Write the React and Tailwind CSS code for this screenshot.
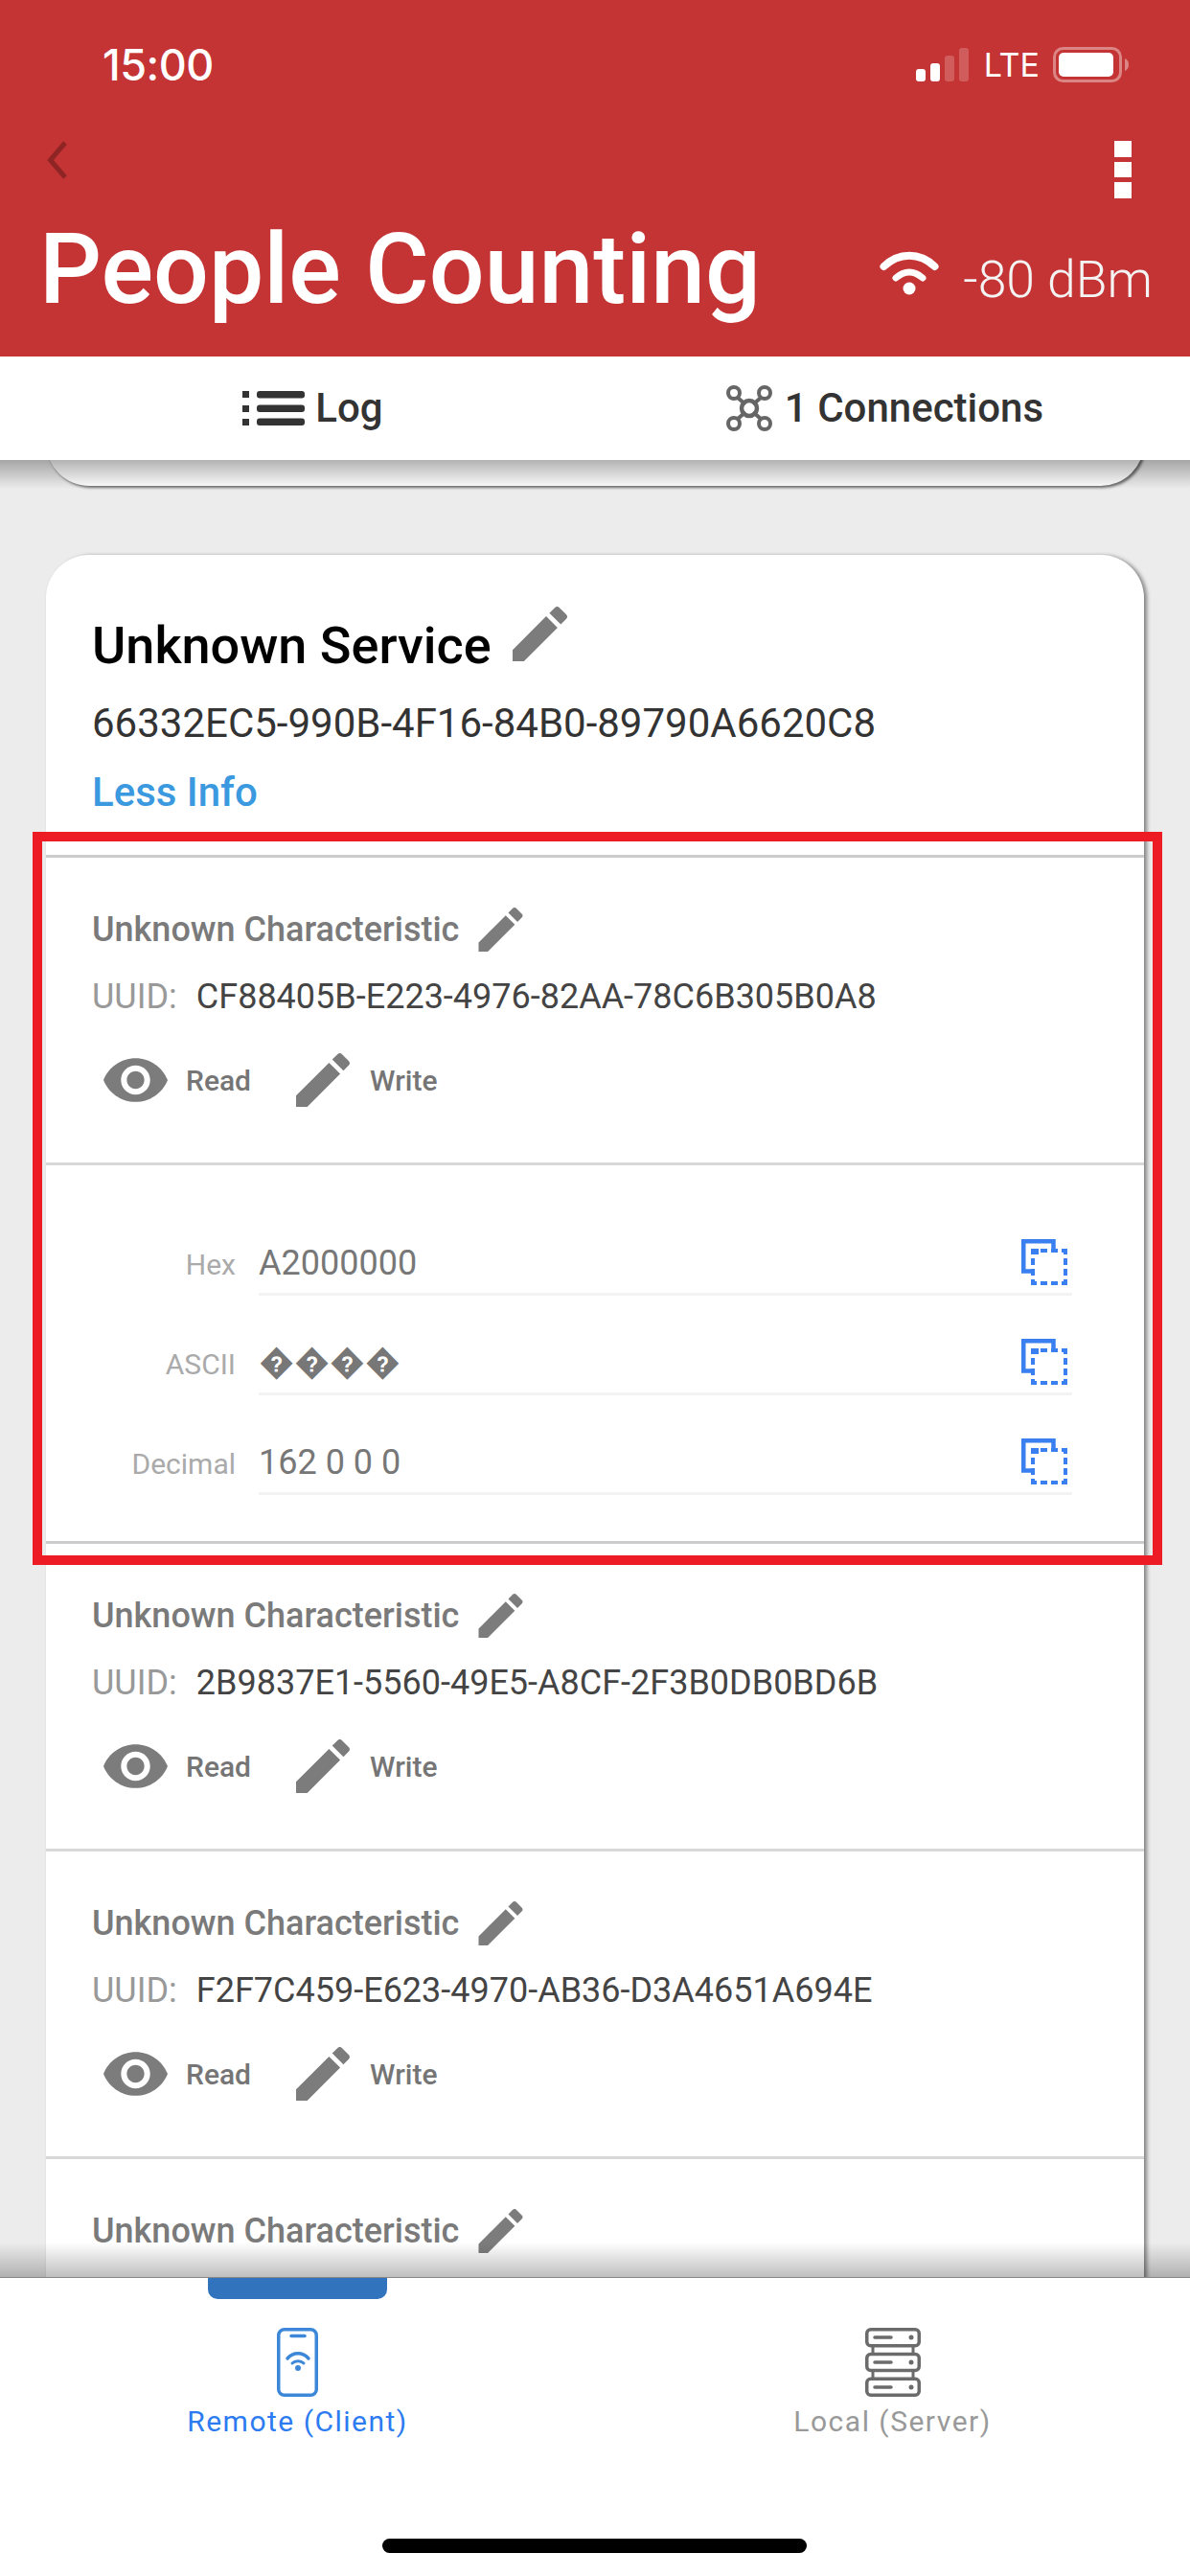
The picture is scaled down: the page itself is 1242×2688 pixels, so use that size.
const PENCIL = "M3 17.25V21h3.75L17.81 9.94l-3.75-3.75L3 17.25zM20.71 7.04c.39-.39.39-1.02 0-1.41l-2.34-2.34c-.39-.39-1.02-.39-1.41 0l-1.83 1.83 3.75 3.75 1.83-1.83z";
const EYE = "M12 4.5C7 4.5 2.73 7.61 1 12c1.73 4.39 6 7.5 11 7.5s9.27-3.11 11-7.5c-1.73-4.39-6-7.5-11-7.5zM12 17c-2.76 0-5-2.24-5-5s2.24-5 5-5 5 2.24 5 5-2.24 5-5 5zm0-8c-1.66 0-3 1.34-3 3s1.34 3 3 3 3-1.34 3-3-1.34-3-3-3z";

function Pencil({ className }) {
  return (
    <svg viewBox="3 3 18 18" className={className} fill="#7c7c7c">
      <path d={PENCIL} />
    </svg>
  );
}

function CopyIcon() {
  return (
    <svg viewBox="0 0 48 48" className="w-[48px] h-[48px]" fill="none" stroke="#3a7ff0">
      <path d="M14 33.500H2.250V2.250H33.500V12" strokeWidth="4.500" />
      <path
        d="M10 12H16V16M20 12H27M31 12H38M42 12H46V16M10 46H16M20 46H27M31 46H38M42 46H46V42M12 12V16M12 20V27M12 31V38M12 42V46M46 20V27M46 31V38"
        strokeWidth="4"
      />
    </svg>
  );
}

function StatusBar() {
  return (
    <div className="mt-[49px] h-[37px] flex items-center justify-between pl-[107px] pr-[64px] text-white">
      <span className="text-[45px] leading-[37px] font-medium font-['Inter',sans-serif] tracking-[-0.5px]">15:00</span>
      <div className="flex items-center">
        <svg viewBox="0 0 55 35" className="w-[55px] h-[35px]" fill="#fff">
          <rect x="0" y="22" width="10" height="13" rx="3" />
          <rect x="15" y="16" width="10" height="19" rx="3" />
          <rect x="30" y="8" width="10" height="27" rx="3" fillOpacity="0.2" />
          <rect x="45" y="0" width="10" height="35" rx="3" fillOpacity="0.2" />
        </svg>
        <span className="ml-[16px] text-[34px] leading-[37px] font-normal font-['Inter',sans-serif]">LTE</span>
        <svg viewBox="0 0 79 37" className="ml-[14px] w-[79px] h-[37px]" fill="#fff">
          <rect x="1.500" y="1.500" width="69" height="34" rx="9" fill="none" stroke="#fff" strokeOpacity="0.4" strokeWidth="3" />
          <rect x="6" y="6" width="57" height="25" rx="5" />
          <path d="M75 12c2.500 1 4 3.500 4 6.500s-1.500 5.500-4 6.500z" fillOpacity="0.4" />
        </svg>
      </div>
    </div>
  );
}

function Header() {
  return (
    <div className="bg-[#c53434] h-[372px] shrink-0 flex flex-col">
      <StatusBar />
      <div className="mt-[61px] h-[60px] flex justify-between items-start pl-[49px] pr-[61px]">
        <svg viewBox="0 0 22 40" className="w-[22px] h-[40px]" fill="none" stroke="#8f2424" strokeWidth="5">
          <path d="M19 2L3.500 20L19 38" />
        </svg>
        <div className="flex flex-col gap-[5px]">
          <div className="w-[18px] h-[17px] bg-white" />
          <div className="w-[18px] h-[16px] bg-white" />
          <div className="w-[18px] h-[17px] bg-white" />
        </div>
      </div>
      <div className="mt-[14px] flex justify-between items-center pl-[41px] pr-[39px] h-[120px]">
        <span className="text-[102px] leading-[120px] font-medium text-white">People Counting</span>
        <div className="flex items-center mt-[14px]">
          <svg viewBox="0 0 62 46" className="w-[62px] h-[46px] mt-[-6px]" fill="none" stroke="#fff" strokeLinecap="round">
            <path d="M4.500 16C20 1 42 1 57.500 16" strokeWidth="8" />
            <path d="M17 28C26 20 36 20 45 28" strokeWidth="7" />
            <circle cx="31" cy="39" r="6.500" fill="#fff" stroke="none" />
          </svg>
          <span className="ml-[25px] mt-[7px] text-[53.500px] leading-[60px] font-light text-[#f4f4f4]">-80 dBm</span>
        </div>
      </div>
    </div>
  );
}

function TabBar() {
  return (
    <div className="bg-white h-[108px] shrink-0 grid grid-cols-2 text-[#333] relative z-10">
      <div className="flex items-center justify-center pl-[32px]">
        <svg viewBox="0 0 65 36" className="w-[65px] h-[36px]" fill="#333">
          <rect x="0" y="0" width="7" height="7" />
          <rect x="0" y="15" width="7" height="7" />
          <rect x="0" y="29" width="7" height="7" />
          <rect x="15" y="0" width="50" height="7.500" rx="3" />
          <rect x="15" y="14.500" width="50" height="7.500" rx="3" />
          <rect x="15" y="28.500" width="50" height="7.500" rx="3" />
        </svg>
        <span className="ml-[11px] text-[42px] leading-[48px] font-medium">Log</span>
      </div>
      <div className="flex items-center justify-center pr-[16px]">
        <svg viewBox="0 0 48 48" className="w-[48px] h-[48px]" fill="none" stroke="#666">
          <path d="M12 13L20 20M36 13L28 20M12 35L20 28M36 35L28 28" strokeWidth="4" />
          <circle cx="8" cy="8" r="6" strokeWidth="4" />
          <circle cx="40" cy="8" r="6" strokeWidth="4" />
          <circle cx="8" cy="40" r="6" strokeWidth="4" />
          <circle cx="40" cy="40" r="6" strokeWidth="4" />
          <circle cx="24" cy="24" r="8" strokeWidth="4.500" />
        </svg>
        <span className="ml-[13px] text-[42px] leading-[48px] font-medium">1 Connections</span>
      </div>
    </div>
  );
}

function CharacteristicTitle() {
  return (
    <div className="mt-[52px] h-[46px] flex items-center">
      <span className="text-[36px] font-medium text-[#7a7a7a]">Unknown Characteristic</span>
      <Pencil className="ml-[20px] w-[47px] h-[46px]" />
    </div>
  );
}

function CharacteristicHeader({ uuid, dividerColor }) {
  return (
    <div className={`h-[321px] border-t-[3px] ${dividerColor} pl-[48px] flex flex-col`}>
      <CharacteristicTitle />
      <div className="mt-[24px] h-[46px] flex items-center text-[36px]">
        <span className="text-[#999]">UUID:</span>
        <span className="ml-[20px] text-[#444]">{uuid}</span>
      </div>
      <div className="mt-[36px] h-[56px] flex items-center text-[30px] font-medium text-[#757575]">
        <svg viewBox="1 4.500 22 15" className="ml-[12px] w-[67px] h-[46px]" fill="#7c7c7c">
          <path d={EYE} />
        </svg>
        <span className="ml-[19px]">Read</span>
        <Pencil className="ml-[47px] w-[56px] h-[56px]" />
        <span className="ml-[21px]">Write</span>
      </div>
    </div>
  );
}

function ValueRow({ label, value }) {
  return (
    <div className="flex items-center mt-[36px] first:mt-[68px]">
      <div className="w-[198px] text-right text-[30px] text-[#aaa] pt-[2px]">{label}</div>
      <div className="ml-[24px] w-[849px] h-[68px] border-b-[3px] border-[#f3f3f3] flex items-center justify-between pr-[5px] text-[36px] text-[#777]">
        <span className="pt-[2px] font-['Roboto','DejaVu_Sans',sans-serif]">{value}</span>
        <CopyIcon />
      </div>
    </div>
  );
}

function Details() {
  return (
    <div className="h-[395px] border-t-[3px] border-[#d8d8d8] flex flex-col">
      <ValueRow label="Hex" value="A2000000" />
      <ValueRow label="ASCII" value={"\uFFFD\uFFFD\uFFFD\uFFFD"} />
      <ValueRow label="Decimal" value="162 0 0 0" />
    </div>
  );
}

function ServiceCard() {
  return (
    <div className="mt-[72px] ml-[48px] w-[1146px] bg-white rounded-t-[45px] shadow-[3px_1px_4px_rgba(0,0,0,0.45)]">
      <div className="h-[313px] pl-[48px] flex flex-col">
        <div className="mt-[64px] h-[60px] flex items-center">
          <span className="text-[54px] font-medium text-black">Unknown Service</span>
          <Pencil className="ml-[22px] mt-[-24px] w-[57px] h-[57px]" />
        </div>
        <div className="mt-[26px] h-[50px] flex items-center text-[42px] text-[#333]">
          66332EC5-990B-4F16-84B0-89790A6620C8
        </div>
        <div className="mt-[22px] h-[50px] flex items-center text-[42px] font-medium text-[#3b99e0]">Less Info</div>
      </div>
      <CharacteristicHeader uuid="CF88405B-E223-4976-82AA-78C6B305B0A8" dividerColor="border-[#cccccc]" />
      <Details />
      <CharacteristicHeader uuid="2B9837E1-5560-49E5-A8CF-2F3B0DB0BD6B" dividerColor="border-[#cccccc]" />
      <CharacteristicHeader uuid="F2F7C459-E623-4970-AB36-D3A4651A694E" dividerColor="border-[#d8d8d8]" />
      <div className="h-[321px] border-t-[3px] border-[#d8d8d8] pl-[48px] flex flex-col">
        <CharacteristicTitle />
      </div>
    </div>
  );
}

function BottomNav() {
  return (
    <div className="bg-white h-[312px] shrink-0 border-t border-[#888] grid grid-cols-2 relative z-10">
      <div className="flex flex-col items-center">
        <div className="w-[187px] h-[22px] bg-[#3173bd] rounded-b-[10px]" />
        <svg viewBox="0 0 43 72" className="mt-[30px] w-[43px] h-[72px]" fill="none" stroke="#3d87d9" strokeLinecap="round">
          <rect x="1.750" y="1.750" width="39.500" height="68.500" rx="6" strokeWidth="3.500" />
          <path d="M15 8.500H29" strokeWidth="3.500" />
          <path d="M11 32C17 25 27 25 33 32" strokeWidth="3.500" />
          <path d="M16 37C19 34 25 34 28 37" strokeWidth="3" />
          <circle cx="22" cy="42" r="3" fill="#3d87d9" stroke="none" />
        </svg>
        <span className="mt-[6px] text-[30px] leading-[40px] text-[#2d7bf0] tracking-[1.5px] font-normal">Remote (Client)</span>
      </div>
      <div className="flex flex-col items-center pt-[52px]">
        <svg viewBox="0 0 58 72" className="w-[58px] h-[72px]" fill="none" stroke="#6b6b6b" strokeLinecap="round">
          <rect x="1.750" y="1.750" width="54.500" height="17" rx="4" strokeWidth="3.500" />
          <rect x="1.750" y="27.500" width="54.500" height="17" rx="4" strokeWidth="3.500" />
          <rect x="1.750" y="53.250" width="54.500" height="17" rx="4" strokeWidth="3.500" />
          <path d="M8 19V27M50 19V27M8 45V53M50 45V53" strokeWidth="3" strokeLinecap="butt" />
          <path d="M10 10H27M10 36H27M10 62H27" strokeWidth="3.500" />
          <circle cx="48" cy="10" r="2.500" fill="#6b6b6b" stroke="none" />
          <circle cx="48" cy="36" r="2.500" fill="#6b6b6b" stroke="none" />
          <circle cx="48" cy="62" r="2.500" fill="#6b6b6b" stroke="none" />
        </svg>
        <span className="mt-[6px] text-[30px] leading-[40px] text-[#999] tracking-[1.5px]">Local (Server)</span>
      </div>
      <div className="absolute left-[399px] top-[272px] w-[443px] h-[15px] rounded-full bg-black" />
    </div>
  );
}

export default function App() {
  return (
    <div className="relative w-[1242px] h-[2688px] overflow-hidden flex flex-col bg-[#ececec] font-['Roboto',sans-serif]">
      <Header />
      <TabBar />
      <div className="relative flex-1 min-h-0 overflow-hidden">
        <div className="mt-[-60px] ml-[48px] w-[1146px] h-[87px] bg-white rounded-b-[45px] shadow-[2px_2px_3px_rgba(0,0,0,0.55)]" />
        <ServiceCard />
        <div className="absolute inset-x-0 top-0 h-[30px] bg-gradient-to-b from-black/30 to-transparent" />
        <div className="absolute inset-x-0 bottom-0 h-[36px] bg-gradient-to-t from-black/25 to-transparent" />
      </div>
      <BottomNav />
      <div className="absolute left-[34px] top-[868px] w-[1179px] h-[765px] border-[10px] border-[#ed1c24]" />
    </div>
  );
}
